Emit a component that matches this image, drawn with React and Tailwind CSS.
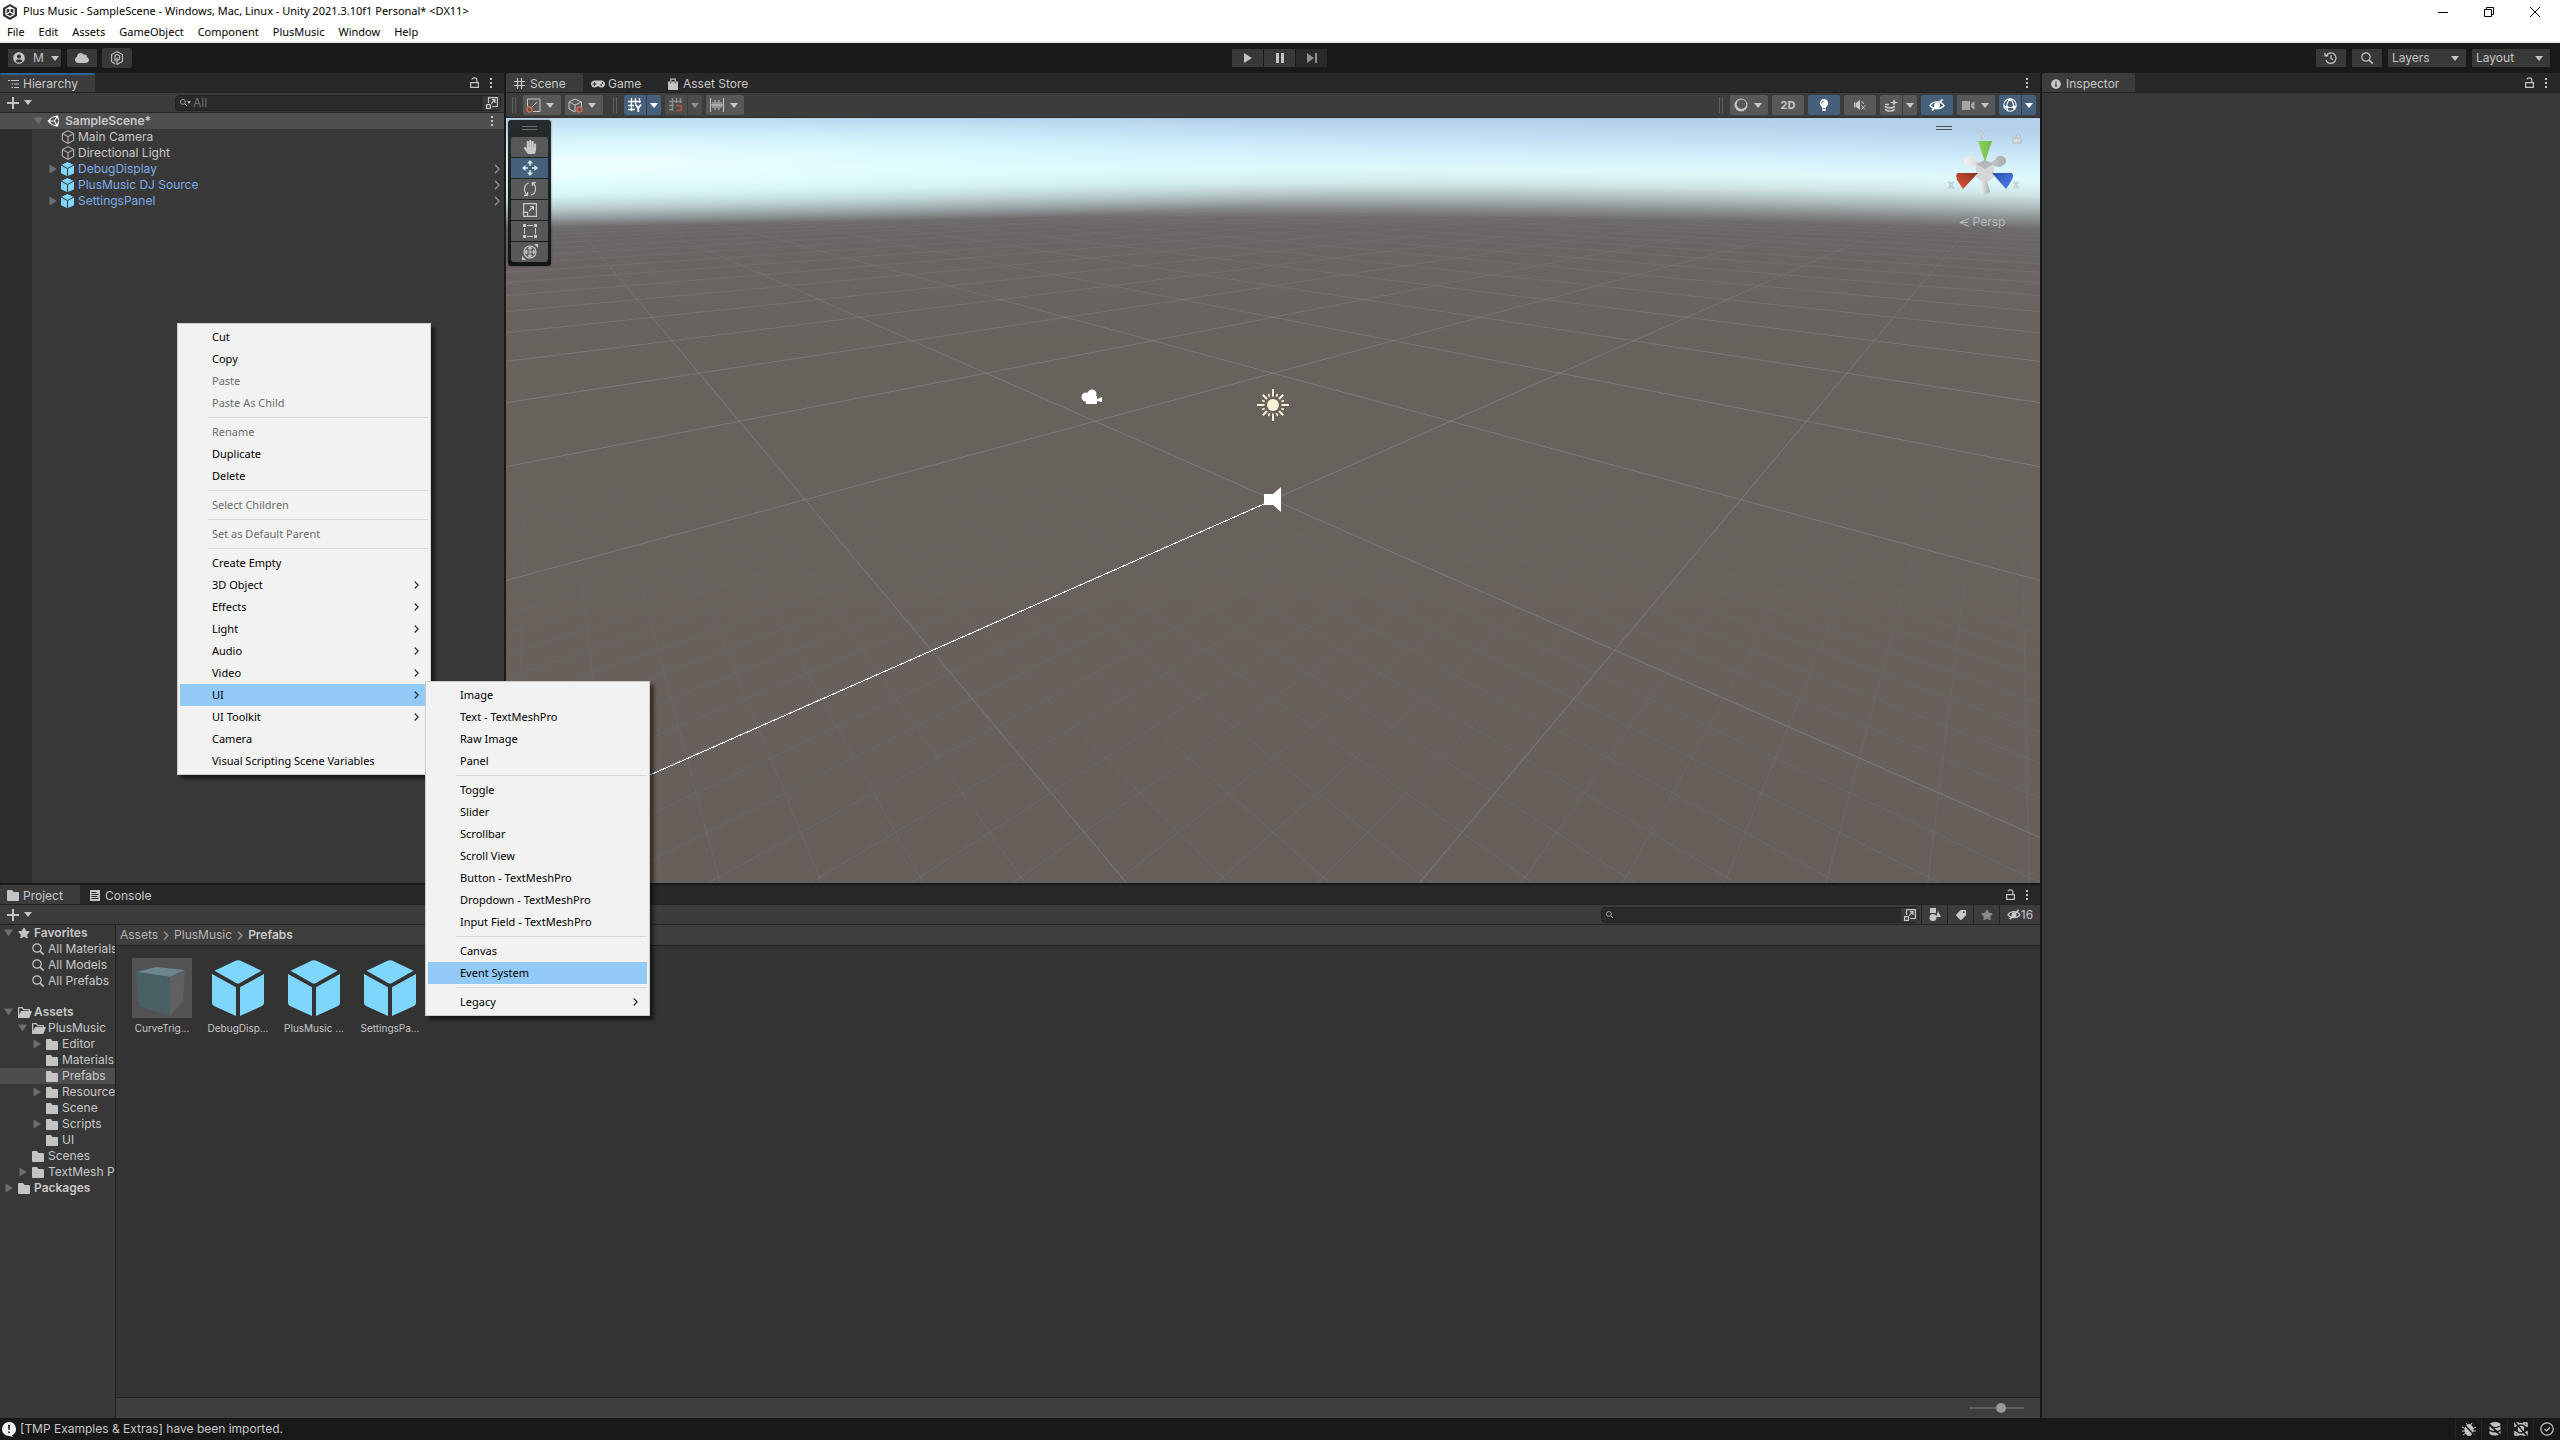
import { FaUnity, FaUserCircle, FaCloud, FaStar, FaTag, FaHandPaper, FaGamepad, FaLightbulb, FaInfoCircle } from "react-icons/fa";

const contextMenu = [
  { label: "Cut" },
  { label: "Copy" },
  { label: "Paste", disabled: true },
  { label: "Paste As Child", disabled: true },
  null,
  { label: "Rename", disabled: true },
  { label: "Duplicate" },
  { label: "Delete" },
  null,
  { label: "Select Children", disabled: true },
  null,
  { label: "Set as Default Parent", disabled: true },
  null,
  { label: "Create Empty" },
  { label: "3D Object", sub: true },
  { label: "Effects", sub: true },
  { label: "Light", sub: true },
  { label: "Audio", sub: true },
  { label: "Video", sub: true },
  { label: "UI", sub: true, active: true },
  { label: "UI Toolkit", sub: true },
  { label: "Camera" },
  { label: "Visual Scripting Scene Variables" },
];

const uiMenu = [
  { label: "Image" },
  { label: "Text - TextMeshPro" },
  { label: "Raw Image" },
  { label: "Panel" },
  null,
  { label: "Toggle" },
  { label: "Slider" },
  { label: "Scrollbar" },
  { label: "Scroll View" },
  { label: "Button - TextMeshPro" },
  { label: "Dropdown - TextMeshPro" },
  { label: "Input Field - TextMeshPro" },
  null,
  { label: "Canvas" },
  { label: "Event System", active: true },
  null,
  { label: "Legacy", sub: true },
];

const hierarchy = [
  { label: "Main Camera" },
  { label: "Directional Light" },
  { label: "DebugDisplay", prefab: true, arrow: true },
  { label: "PlusMusic DJ Source", prefab: true },
  { label: "SettingsPanel", prefab: true, arrow: true },
];

const favorites = [
  { label: "Favorites", icon: "star", level: 0, arrow: "down", bold: true },
  { label: "All Materials", icon: "search", level: 1 },
  { label: "All Models", icon: "search", level: 1 },
  { label: "All Prefabs", icon: "search", level: 1 },
];

const folders = [
  { label: "Assets", icon: "open", level: 0, arrow: "down", bold: true },
  { label: "PlusMusic", icon: "open", level: 1, arrow: "down" },
  { label: "Editor", icon: "folder", level: 2, arrow: "right" },
  { label: "Materials", icon: "folder", level: 2 },
  { label: "Prefabs", icon: "folder", level: 2, active: true },
  { label: "Resources", icon: "folder", level: 2, arrow: "right" },
  { label: "Scene", icon: "folder", level: 2 },
  { label: "Scripts", icon: "folder", level: 2, arrow: "right" },
  { label: "UI", icon: "folder", level: 2 },
  { label: "Scenes", icon: "folder", level: 1 },
  { label: "TextMesh Pro", icon: "folder", level: 1, arrow: "right" },
  { label: "Packages", icon: "folder", level: 0, arrow: "right", bold: true },
];

/* ---------- icons ---------- */

function Caret({ className = "" }) {
  return (
    <svg viewBox="0 0 8 5" className={`h-[5px] w-2 shrink-0 fill-current ${className}`}>
      <path d="M0 0h8L4 5z" />
    </svg>
  );
}

function TreeArrow({ dir }) {
  return (
    <svg viewBox="0 0 10 10" className="size-[10px] shrink-0 fill-[#6e6e6e]">
      {dir === "down" && <path d="M0 1.5h9L4.5 8.5z" />}
      {dir === "right" && <path d="M1.5 .5v9L9 5z" />}
    </svg>
  );
}

function Dots() {
  return (
    <svg viewBox="0 0 4 12" className="h-3 w-1 fill-[#c4c4c4]">
      <path d="M1 1h2v2H1zM1 5h2v2H1zM1 9h2v2H1z" />
    </svg>
  );
}

function Lock() {
  return (
    <svg viewBox="0 0 9 11" className="h-[11px] w-[9px] fill-none stroke-[#c4c4c4]" strokeWidth="1.2">
      <path d="M.6 5.6h7.800v4.800H.6zM2 2.500C2.400.2 6.800.2 6.800 2.800v2.800" />
    </svg>
  );
}

function Plus() {
  return (
    <svg viewBox="0 0 12 12" className="size-3 stroke-[#c4c4c4]" strokeWidth="2">
      <path d="M6 0v12M0 6h12" />
    </svg>
  );
}

function Magnifier({ className = "size-3" }) {
  return (
    <svg viewBox="0 0 12 12" className={`shrink-0 fill-none stroke-[#c4c4c4] ${className}`} strokeWidth="1.2">
      <circle cx="5" cy="5" r="4.2" />
      <path d="M8 8l3.600 3.600" strokeWidth="1.6" />
    </svg>
  );
}

function Popout() {
  return (
    <svg viewBox="0 0 12 12" className="size-3 fill-none stroke-[#c4c4c4]" strokeWidth="1.2">
      <path d="M2.500 6V.6h8.900v8.900H6M.6 7.600h3.800v3.800H.6zM5 6.700l4-4M5.800 2.700H9v3.200" />
    </svg>
  );
}

function CubeOutline() {
  return (
    <svg viewBox="0 0 14 14" className="size-[14px] shrink-0 fill-none stroke-[#c4c4c4]" strokeWidth="1">
      <path d="M7 .6l5.700 2.900v6.800L7 13.400 1.300 10.300V3.500zM1.300 3.500L7 6.600l5.700-3.100M7 6.600v6.800" />
    </svg>
  );
}

function PrefabCube({ className }) {
  return (
    <svg viewBox="0 0 52 56" className={`shrink-0 fill-[#7fd6fd] ${className}`}>
      <path d="M2.500 10.700L24 .6q2-.9 4 0l21.500 10.100L28 23q-2 1.100-4 0z" />
      <path d="M0 14l24 13.300V56L2 46q-2-1-2-3z" />
      <path d="M52 14L28 27.300V56l22-10q2-1 2-3z" />
    </svg>
  );
}

function Folder() {
  return (
    <svg viewBox="0 0 12 11" className="h-[11px] w-3 shrink-0 fill-[#c4c4c4]">
      <path d="M0 1q0-1 1-1h4l1.500 2H11q1 0 1 1v7q0 1-1 1H1q-1 0-1-1z" />
    </svg>
  );
}

function FolderOpen() {
  return (
    <svg viewBox="0 0 14 11" className="h-[11px] w-[14px] shrink-0 fill-[#c4c4c4]">
      <path d="M0 10.500V1q0-1 1-1h3.500L6 2h5q1 0 1 1v1h-1.200V3.200H5.300L4 1.300H1.200V8L3 4h11l-2.200 6q-.4 1-1.300 1H.8q-.5 0-.8-.5z" />
    </svg>
  );
}

function HierarchyIcon() {
  return (
    <svg viewBox="0 0 11 10" className="h-[10px] w-[11px] stroke-[#c4c4c4]" strokeWidth="1.2">
      <path d="M0 1.500h2M3 1.500h8M3.500 5H5M6 5h5M3.500 8.500H5M6 8.500h5" />
    </svg>
  );
}

function GridIcon() {
  return (
    <svg viewBox="0 0 11 11" className="size-[11px] stroke-current" strokeWidth="1.2">
      <path d="M3.500 0v11M7.500 0v11M0 3.500h11M0 7.500h11" />
    </svg>
  );
}

function StoreIcon() {
  return (
    <svg viewBox="0 0 10 12" className="h-3 w-[10px]">
      <path d="M0 3.500h10V11q0 1-1 1H1q-1 0-1-1z" fill="#c4c4c4" />
      <path d="M2.800 5V1.200h4.400V5" fill="none" stroke="#c4c4c4" strokeWidth="1.2" />
      <path d="M2.800 3.500v2M7.200 3.500v2" stroke="#282828" strokeWidth="0.8" />
    </svg>
  );
}

function ConsoleIcon() {
  return (
    <svg viewBox="0 0 10 11" className="h-[11px] w-[10px]">
      <path d="M0 0h10v11H0z" fill="#c4c4c4" />
      <path d="M1.500 2.500h5M1.500 4.500h7M1.500 6.500h6M1.500 8.500h7" stroke="#282828" strokeWidth="1" />
    </svg>
  );
}

function EyeOff({ className = "h-3 w-4" }) {
  return (
    <svg viewBox="0 0 16 12" className={`fill-none stroke-current ${className}`} strokeWidth="1.4">
      <path d="M1 6.500C4 1.600 12 1.600 15 6.500 12 10.600 4 10.600 1 6.500z" />
      <circle cx="8" cy="6.3" r="2.2" fill="currentColor" />
      <path d="M3 11.500L13.500.5" strokeWidth="1.8" />
    </svg>
  );
}

function MenuChevron() {
  return (
    <svg viewBox="0 0 5 8" className="h-2 w-[5px] fill-none stroke-[#333]" strokeWidth="1.3">
      <path d="M.7.5L4.200 4 .7 7.500" />
    </svg>
  );
}

/* ---------- shared controls ---------- */

function Tab({ icon, children, active, focus, className = "" }) {
  return (
    <button
      type="button"
      className={`flex h-[19px] items-center text-xs text-[#c8c8c8] ${active ? "rounded-t-[2px] bg-[#3c3c3c]" : ""} ${focus ? "border-t-2 border-[#2f6294]" : "border-t-2 border-transparent"} ${className}`}
    >
      {icon}
      {children}
    </button>
  );
}

function ToolButton({ on, label, className = "", children }) {
  return (
    <button
      type="button"
      aria-label={label}
      className={`flex h-5 items-center justify-center ${on ? "bg-[#46607c] text-white" : "bg-[#585858] text-[#c8c8c8]"} ${className}`}
    >
      {children}
    </button>
  );
}

function Grip() {
  return <span className="h-4 w-1 border-x border-[#606060]" />;
}

function Menu({ items, className }) {
  return (
    <div className={`absolute border border-[#ccc] bg-[#f2f2f2] p-[2px] font-['Noto_Sans',sans-serif] text-[11px] text-black shadow-[4px_4px_3px_rgba(0,0,0,0.5)] ${className}`}>
      {items.map((item, i) =>
        item === null ? (
          <hr key={i} className="my-[3px] ml-7 border-t border-[#d7d7d7]" />
        ) : (
          <button
            key={i}
            type="button"
            disabled={item.disabled}
            className={`flex h-[22px] w-full items-center justify-between pr-[9px] pl-8 ${item.disabled ? "text-[#6d6d6d]" : ""} ${item.active ? "bg-[#91c9f7]" : ""}`}
          >
            {item.label}
            {item.sub && <MenuChevron />}
          </button>
        )
      )}
    </div>
  );
}

/* ---------- window chrome ---------- */

function TitleBar() {
  return (
    <header className="border-b-2 border-[#ebedec] bg-white font-['Noto_Sans',sans-serif] text-[11px] text-black">
      <div className="flex h-[23px] items-center pl-[3px]">
        <svg viewBox="0 0 14 16" className="h-4 w-[14px]">
          <path d="M7 0l7 4v8l-7 4-7-4V4z" fill="#333" />
          <path d="M7 3l4 2.300v5L7 12.800 3 10.300v-5zM7 8V3M7 8l4 2.300M7 8l-4 2.300" fill="none" stroke="#fff" strokeWidth="1.3" />
        </svg>
        <h1 className="ml-[6px] flex-1">Plus Music - SampleScene - Windows, Mac, Linux - Unity 2021.3.10f1 Personal* &lt;DX11&gt;</h1>
        <div className="flex gap-9 pr-5">
          <button type="button" aria-label="Minimize">
            <svg viewBox="0 0 10 10" className="size-[10px] stroke-black"><path d="M0 5.500h10" /></svg>
          </button>
          <button type="button" aria-label="Restore">
            <svg viewBox="0 0 10 10" className="size-[10px] fill-none stroke-black"><path d="M.5 2.500h7v7h-7zM2.500 2.500v-2h7v7h-2" /></svg>
          </button>
          <button type="button" aria-label="Close">
            <svg viewBox="0 0 10 10" className="size-[10px] stroke-black"><path d="M0 0l10 10M10 0L0 10" /></svg>
          </button>
        </div>
      </div>
      <nav className="flex h-[18px] items-center gap-[14px] pl-[7px]">
        {["File", "Edit", "Assets", "GameObject", "Component", "PlusMusic", "Window", "Help"].map((m) => (
          <button key={m} type="button">{m}</button>
        ))}
      </nav>
    </header>
  );
}

function TopSelect({ label }) {
  return (
    <label className="flex h-[18px] w-[78px] items-center bg-[#383838] pr-[7px]">
      <select aria-label={label} className="min-w-0 flex-1 appearance-none pl-1 text-xs text-[#c4c4c4] outline-none">
        <option>{label}</option>
      </select>
      <Caret className="text-[#c4c4c4]" />
    </label>
  );
}

function MainToolbar() {
  return (
    <div className="grid h-[30px] grid-cols-3 items-center bg-[#191919] text-[#c4c4c4]">
      <div className="flex items-center pl-2">
        <button type="button" className="flex h-[18px] w-[53px] items-center bg-[#383838] pl-[5px] text-xs">
          <FaUserCircle className="size-3" />
          <span className="mr-[7px] ml-2">M</span>
          <Caret />
        </button>
        <button type="button" aria-label="Cloud" className="ml-[6px] flex h-[18px] w-[30px] items-center justify-center bg-[#383838]">
          <FaCloud className="size-[14px]" />
        </button>
        <button type="button" aria-label="PlusMusic" className="ml-[5px] flex h-5 w-[30px] items-center justify-center rounded-[2px] bg-[#383838]">
          <svg viewBox="0 0 12 14" className="h-[14px] w-3 fill-none stroke-current" strokeWidth="1.1">
            <path d="M4 13L.6 10.500v-7L6 .6l5.400 2.900v7L6 13.400V6.500M4 10.500V4.800L6 3.400l2.600 1.600v3L6 9.800" />
          </svg>
        </button>
      </div>
      <div className="flex justify-center gap-px">
        <button type="button" aria-label="Play" className="flex h-[18px] w-[31px] items-center justify-center bg-[#383838]">
          <svg viewBox="0 0 8 10" className="h-[10px] w-2 fill-current"><path d="M0 0l8 5-8 5z" /></svg>
        </button>
        <button type="button" aria-label="Pause" className="flex h-[18px] w-[31px] items-center justify-center bg-[#383838]">
          <svg viewBox="0 0 8 10" className="h-[10px] w-2 fill-current"><path d="M0 0h3v10H0zM5 0h3v10H5z" /></svg>
        </button>
        <button type="button" aria-label="Step" className="flex h-[18px] w-[31px] items-center justify-center bg-[#2a2a2a] text-[#8f8f8f]">
          <svg viewBox="0 0 10 10" className="size-[10px] fill-current"><path d="M0 0l7 5-7 5zM8 0h2v10H8z" /></svg>
        </button>
      </div>
      <div className="flex justify-end gap-[6px] pr-[10px]">
        <button type="button" aria-label="Undo history" className="flex h-[18px] w-[30px] items-center justify-center bg-[#383838]">
          <svg viewBox="0 0 13 12" className="h-3 w-[13px] fill-none stroke-current" strokeWidth="1.3">
            <path d="M2.300 3.500A5.200 5.200 0 1 1 2 8.200M1 .8v3h3.200M7 3.200V6.500l2 1.300" />
          </svg>
        </button>
        <button type="button" aria-label="Search" className="flex h-[18px] w-[30px] items-center justify-center bg-[#383838]">
          <Magnifier />
        </button>
        <TopSelect label="Layers" />
        <TopSelect label="Layout" />
      </div>
    </div>
  );
}

/* ---------- hierarchy ---------- */

function Hierarchy() {
  return (
    <section className="flex w-[504px] shrink-0 flex-col bg-[#383838]">
      <div className="flex items-center border-b border-[#232323] bg-[#282828] pr-[11px]">
        <Tab active focus icon={<HierarchyIcon />} className="w-[95px] gap-1 pl-2">Hierarchy</Tab>
        <div className="ml-auto flex items-center gap-[10px]">
          <Lock />
          <Dots />
        </div>
      </div>
      <div className="flex h-5 items-center border-b border-[#232323] bg-[#3c3c3c] pr-[3px] pl-[7px]">
        <button type="button" aria-label="Create" className="flex items-center gap-[5px] text-[#c4c4c4]">
          <Plus />
          <Caret />
        </button>
        <label className="ml-auto flex h-4 w-[326px] items-center rounded-[4px] border border-[#212121] bg-[#2a2a2a] pl-1">
          <Magnifier className="size-[7px]" />
          <Caret className="h-[3px] w-[4px] text-[#c4c4c4]" />
          <input placeholder="All" aria-label="Search hierarchy" className="ml-[2px] min-w-0 flex-1 text-xs text-[#c4c4c4] placeholder-[#6e6e6e] outline-none" />
          <span className="flex h-full w-[17px] items-center justify-center bg-[#3a3a3a]"><Popout /></span>
        </label>
      </div>
      <div className="flex flex-1 flex-col text-xs text-[#c8c8c8]">
        <div className="flex h-4 items-center bg-[#4f4f4f] pr-[10px] pl-[34px] font-semibold">
          <TreeArrow dir="down" />
          <FaUnity className="mr-1 ml-[3px] size-[14px] text-white" />
          <span className="flex-1">SampleScene*</span>
          <Dots />
        </div>
        <div className="flex flex-1">
          <div className="w-8 bg-[#2d2d2d]" />
          <ul className="flex-1">
            {hierarchy.map((item) => (
              <li key={item.label} className={`flex h-4 items-center pr-1 pl-4 ${item.prefab ? "text-[#7faae8]" : ""}`}>
                <TreeArrow dir={item.arrow ? "right" : ""} />
                <span className="mr-[3px] ml-[3px] flex w-[14px]">
                  {item.prefab ? <PrefabCube className="h-[14px] w-[13px]" /> : <CubeOutline />}
                </span>
                <span className="flex-1">{item.label}</span>
                {item.prefab && (
                  <svg viewBox="0 0 6 10" className="h-[10px] w-[6px] fill-none stroke-[#8a8a8a]" strokeWidth="1.6">
                    <path d="M1 .8L5 5 1 9.200" />
                  </svg>
                )}
              </li>
            ))}
          </ul>
        </div>
      </div>
    </section>
  );
}

/* ---------- scene view ---------- */

// Ground plane projection: grid node (i, j) to view coordinates.
const HORIZON = 54.7;
const DEPTH = 1.586;

function project(i, j) {
  const z = DEPTH + (i + j) / 2;
  return [767 + (742 * (i - j)) / 2 / z, HORIZON + 518.5 / z];
}

function gridPath(step, count, far) {
  let d = "";
  for (let n = -count; n <= count; n++) {
    const i = n * step;
    const start = 2 * (0.25 - DEPTH) - i;
    if (start > far) continue;
    const [x1, y1] = project(i, start);
    const [x2, y2] = project(i, far);
    d += `M${x1.toFixed(1)} ${y1.toFixed(1)}L${x2.toFixed(1)} ${y2.toFixed(1)}`;
    d += `M${(1534 - x1).toFixed(1)} ${y1.toFixed(1)}L${(1534 - x2).toFixed(1)} ${y2.toFixed(1)}`;
  }
  return d;
}

const majorGrid = gridPath(1, 24, 60);
const minorGrid = gridPath(0.1, 60, 6);

function Viewport() {
  return (
    <svg viewBox="0 0 1534 766" preserveAspectRatio="xMidYMin slice" className="absolute inset-0 size-full">
      <defs>
        <radialGradient id="sky" gradientUnits="userSpaceOnUse" cx="0" cy="0" r="1100" gradientTransform="translate(767 1096) scale(4.95 1)">
          <stop offset="0.3" stopColor="#675f5a" />
          <stop offset="0.8" stopColor="#68625d" />
          <stop offset="0.895" stopColor="#6b6665" />
          <stop offset="0.906" stopColor="#6e696b" />
          <stop offset="0.914" stopColor="#868a8b" />
          <stop offset="0.925" stopColor="#acb9ba" />
          <stop offset="0.937" stopColor="#d0e6e6" />
          <stop offset="0.95" stopColor="#dffafb" />
          <stop offset="0.965" stopColor="#d3effb" />
          <stop offset="0.98" stopColor="#c2dff3" />
          <stop offset="0.996" stopColor="#b4d0ea" />
        </radialGradient>
        <radialGradient id="glow" gradientUnits="userSpaceOnUse" cx="0" cy="0" r="100" gradientTransform="translate(70 46) scale(9 0.62)">
          <stop offset="0" stopColor="#f0ffff" />
          <stop offset="0.5" stopColor="#dcffff" stopOpacity="0.6" />
          <stop offset="1" stopColor="#d0f4ff" stopOpacity="0" />
        </radialGradient>
        <linearGradient id="farFade" x1="0" y1="0" x2="0" y2="766" gradientUnits="userSpaceOnUse">
          <stop offset="0.1" stopColor="#8d8f90" stopOpacity="0" />
          <stop offset="0.2" stopColor="#8d8f90" stopOpacity="0.25" />
          <stop offset="0.35" stopColor="#8d8f90" stopOpacity="0.55" />
          <stop offset="1" stopColor="#858787" stopOpacity="0.5" />
        </linearGradient>
        <linearGradient id="nearFade" x1="0" y1="0" x2="0" y2="766" gradientUnits="userSpaceOnUse">
          <stop offset="0.42" stopColor="#7c7d7b" stopOpacity="0" />
          <stop offset="0.7" stopColor="#7c7d7b" stopOpacity="0.16" />
          <stop offset="1" stopColor="#7c7d7b" stopOpacity="0.35" />
        </linearGradient>
      </defs>
      <rect width="1534" height="766" fill="url(#sky)" />
      <rect width="1534" height="108" fill="url(#glow)" />
      <path d={minorGrid} stroke="url(#nearFade)" fill="none" />
      <path d={majorGrid} stroke="url(#farFade)" fill="none" />
      <path d="M767 382L144 657L0 722" stroke="#fff" fill="none" shapeRendering="crispEdges" />

      {/* camera gizmo */}
      <g fill="#fff" transform="translate(575 271)">
        <circle cx="5" cy="8" r="4.5" />
        <circle cx="11" cy="5" r="4.5" />
        <path d="M4 7h12v3l5-2v5l-5-1v3H5z" />
      </g>
      {/* light gizmo */}
      <g stroke="#fff1d6" strokeWidth="2" transform="translate(767 287)">
        <circle r="6" fill="#fff1d6" stroke="none" />
        {[0, 45, 90, 135, 180, 225, 270, 315].map((a) => (
          <g key={a} transform={`rotate(${a})`}>
            <path d={a % 90 ? "M0-8.500v-6" : "M0-8.500v-7.500"} />
            <path d="M0-9v-3" transform="rotate(22.5)" strokeWidth="1.6" />
          </g>
        ))}
      </g>
      {/* audio source gizmo */}
      <path d="M758 376h9l8-7v25l-8-7h-9z" fill="#fff" />
    </svg>
  );
}

function AxisGizmo() {
  return (
    <div className="absolute top-2 right-3 flex w-[92px] flex-col items-center">
      <svg viewBox="0 0 92 84" className="h-[84px] w-[92px]">
        <defs>
          <linearGradient id="gy"><stop stopColor="#86d65a" /><stop offset="1" stopColor="#79b84f" /></linearGradient>
          <linearGradient id="gx" x1="0" y1="1" x2="1" y2="0"><stop stopColor="#e2553c" /><stop offset="1" stopColor="#8c3022" /></linearGradient>
          <linearGradient id="gz" x1="1" y1="1" x2="0" y2="0"><stop stopColor="#4b84f5" /><stop offset="1" stopColor="#2c50a8" /></linearGradient>
          <linearGradient id="gw"><stop stopColor="#f2f2f2" /><stop offset="1" stopColor="#a9adae" /></linearGradient>
        </defs>
        <path d="M0 .5h16M0 3.500h16" stroke="#4a4f52" />
        <path d="M45 43L38 40q-3 2-6 0-4-2-4-5 0-4 4-5 5-1 7 4l8 4zM53 43l7-3q3 2 6 0 4-2 4-5 0-4-4-5-5-1-7 4l-8 4z" fill="url(#gw)" />
        <path d="M40 38l9-4 9 4v13l-9 7-9-7z" fill="#d4d6d7" />
        <path d="M40 38l9-4 9 4-9 5z" fill="#b5b9ba" />
        <path d="M47 55h4l3 10q0 3-5 3t-5-3z" fill="url(#gw)" />
        <path d="M42 15h14l-7 21z" fill="url(#gy)" />
        <path d="M42 47H22q-3 1-1 7l6 9z" fill="url(#gx)" />
        <path d="M56 47h20q2 2 0 7l-6 9z" fill="url(#gz)" />
        <path d="M77 12h8v5h-8zM80 12c0-5 4-5 4-1" fill="#d8dcde" stroke="#aab0b4" strokeWidth="0.8" />
        <g fill="#eef2f3" stroke="#a9b2b5" strokeWidth="0.5" fontFamily="Inter, sans-serif" fontSize="11" fontWeight="600">
          <text x="44" y="11">y</text>
          <text x="12" y="62">x</text>
          <text x="77" y="62">z</text>
        </g>
      </svg>
      <button type="button" className="mt-1 flex items-center gap-1 text-xs text-[#b9bcbd]">
        <svg viewBox="0 0 10 9" className="h-[9px] w-[10px] fill-none stroke-current"><path d="M10 .5L.8 4.500 10 8.500M.8 4.500H9" /></svg>
        Persp
      </button>
    </div>
  );
}

function ToolPalette() {
  return (
    <div className="absolute top-[2px] left-[2px] flex w-[43px] flex-col items-center gap-px rounded-[3px] bg-gradient-to-b from-[#262c2d] to-[#151515] pt-[6px] pb-1 shadow-[0_0_2px_rgba(0,0,0,0.5)]">
      <span className="mb-[6px] h-1 w-[15px] border-y border-[#6b6f70]" />
      <ToolButton label="View" className="w-[37px] rounded-t-[3px]"><FaHandPaper className="size-[14px]" /></ToolButton>
      <ToolButton on label="Move" className="w-[37px]">
        <svg viewBox="0 0 16 16" className="size-4 fill-[#dfe6ee] stroke-[#dfe6ee]" strokeWidth="1.4">
          <path d="M8 1v5M8 10v5M1 8h5M10 8h5" /><path stroke="none" d="M8 0l3 3.500H5zM8 16l3-3.500H5zM0 8l3.500-3v6zM16 8l-3.500-3v6z" />
        </svg>
      </ToolButton>
      <ToolButton label="Rotate" className="w-[37px]">
        <svg viewBox="0 0 14 14" className="size-[14px] fill-none stroke-current" strokeWidth="1.2">
          <path d="M6 1C1 2 0 9 4 13M1 13.400h3.600V10M8 13c5-1 6-8 2-12M13 .6H9.400V4" />
        </svg>
      </ToolButton>
      <ToolButton label="Scale" className="w-[37px]">
        <svg viewBox="0 0 14 14" className="size-[14px] fill-none stroke-current" strokeWidth="1.2">
          <path d="M.6.6h12.800v12.800H.6zM.6 9.400h4v4M6 8l4.500-4.500M7 3.500h3.500V7" />
        </svg>
      </ToolButton>
      <ToolButton label="Rect" className="w-[37px]">
        <svg viewBox="0 0 14 14" className="size-[14px] fill-current stroke-current">
          <path stroke="none" d="M0 0h3v3H0zM11 0h3v3h-3zM0 11h3v3H0zM11 11h3v3h-3z" /><path d="M4 1.500h6M4 12.500h6M1.500 4v6M12.500 4v6" />
        </svg>
      </ToolButton>
      <ToolButton label="Transform" className="w-[37px] rounded-b-[3px]">
        <svg viewBox="0 0 16 16" className="size-4 fill-none stroke-current" strokeWidth="1.1">
          <circle cx="8" cy="8" r="6" /><path d="M8 3v10M3 8h10M6 5l2-2 2 2M6 11l2 2 2-2M5 6L3 8l2 2M11 6l2 2-2 2" /><path fill="currentColor" stroke="none" d="M12 0h4v4zM0 12v4h4z" />
        </svg>
      </ToolButton>
    </div>
  );
}

function SceneView() {
  return (
    <section className="flex min-w-0 flex-1 flex-col bg-[#383838]">
      <div className="flex items-center border-b border-[#232323] bg-[#282828] pr-[11px]">
        <Tab active icon={<GridIcon />} className="w-[77px] gap-[5px] pl-2">Scene</Tab>
        <Tab icon={<FaGamepad className="size-[14px]" />} className="w-[77px] gap-[3px] pl-2">Game</Tab>
        <Tab icon={<StoreIcon />} className="gap-[5px] pl-2">Asset Store</Tab>
        <div className="ml-auto"><Dots /></div>
      </div>
      <div className="flex h-6 items-center bg-[#3c3c3c] pr-1 pl-[6px]">
        <Grip />
        <ToolButton label="Pivot" className="ml-[7px] w-[38px] gap-[5px] rounded-[2px] pr-1">
          <svg viewBox="0 0 15 15" className="size-[15px] fill-none stroke-current">
            <path d="M1.500 8.500V1h12.500v12.500H7M6 9L11 4" /><circle cx="3.500" cy="11.500" r="2.5" stroke="#e0694a" strokeWidth="1.3" />
          </svg>
          <Caret />
        </ToolButton>
        <ToolButton label="Space" className="ml-1 w-[38px] gap-[5px] rounded-[2px] pr-1">
          <svg viewBox="0 0 15 15" className="size-[15px] fill-none stroke-current">
            <path d="M7 14L1 11V4l6-3 6.500 3v5M1 4l6 3 6.500-3M7 7v7" /><circle cx="11.500" cy="11.500" r="2.5" stroke="#e0694a" strokeWidth="1.3" />
          </svg>
          <Caret />
        </ToolButton>
        <span className="ml-[10px] flex"><Grip /></span>
        <ToolButton on label="Grid" className="ml-[7px] w-[22px] rounded-l-[2px]">
          <svg viewBox="0 0 14 14" className="size-[14px] fill-none stroke-current" strokeWidth="1.3">
            <path d="M3.500 0v13M7.500 0v6M11.500 0v5M0 3.500h13M0 7.500h6M0 11.500h7" /><path d="M7.500 6.500L10.300 10l2.800-3.500M10.300 10v4" strokeWidth="1.8" />
          </svg>
        </ToolButton>
        <ToolButton on label="Grid options" className="ml-px w-[14px] rounded-r-[2px]"><Caret /></ToolButton>
        <ToolButton label="Snap" className="ml-1 w-[22px] rounded-l-[2px] opacity-60">
          <svg viewBox="0 0 14 14" className="size-[14px] fill-none stroke-current" strokeWidth="1.3">
            <path d="M3.500 0v13M7.500 0v5M11.500 0v5M0 3.500h13M0 7.500h5M0 11.500h4" /><path d="M7 7.500h3a2.500 2.500 0 0 1 0 5H7" stroke="#e0694a" strokeWidth="2" />
          </svg>
        </ToolButton>
        <ToolButton label="Snap options" className="ml-px w-[14px] rounded-r-[2px] opacity-60"><Caret /></ToolButton>
        <ToolButton label="Increment" className="ml-1 w-[38px] gap-[6px] rounded-[2px] pr-[2px]">
          <svg viewBox="0 0 14 14" className="size-[14px] stroke-current">
            <path d="M.5 0v14M13.500 0v14M3 4v6M5 2v10M7 4v6M9 2v10M11 4v6M1 7h12" />
          </svg>
          <Caret />
        </ToolButton>

        <span className="ml-auto flex"><Grip /></span>
        <ToolButton label="Draw mode" className="ml-[7px] w-[38px] gap-[6px] rounded-[2px] pr-[2px]">
          <svg viewBox="0 0 14 14" className="size-[14px]">
            <circle cx="7" cy="7" r="6.5" fill="#c8c8c8" /><circle cx="7.500" cy="6.200" r="4.8" fill="#585858" />
          </svg>
          <Caret />
        </ToolButton>
        <ToolButton label="2D" className="ml-1 w-8 rounded-[2px] text-[11px] font-bold">2D</ToolButton>
        <ToolButton on label="Lighting" className="ml-1 w-8 rounded-[2px]"><FaLightbulb className="size-3" /></ToolButton>
        <ToolButton label="Audio" className="ml-1 w-8 rounded-[2px]">
          <svg viewBox="0 0 12 10" className="h-[10px] w-3 fill-current stroke-current" strokeWidth="1">
            <path stroke="none" d="M0 2.500h1.500v5H0zM2 3l4-3v10L2 7z" /><path d="M7.500 5.500l3.500 4M11 5.500l-3.500 4M7.500 1.500q2 .5 2 2.500" fill="none" />
          </svg>
        </ToolButton>
        <ToolButton label="Effects" className="ml-1 w-[22px] rounded-l-[2px]">
          <svg viewBox="0 0 14 13" className="h-[13px] w-[14px] fill-none stroke-current" strokeWidth="1.5">
            <path d="M1 5.500h4M1 7.500q5 3 10 0M1 10.500q5 3 10 0" /><path stroke="none" fill="currentColor" d="M10 0l1 2.500L14 3.500 11 4.500 10 7 9 4.500 6 3.500l3-1z" />
          </svg>
        </ToolButton>
        <ToolButton label="Effects options" className="ml-px w-[14px] rounded-r-[2px]"><Caret /></ToolButton>
        <ToolButton on label="Scene visibility" className="ml-1 w-8 rounded-[2px]"><EyeOff /></ToolButton>
        <ToolButton label="Camera" className="ml-1 w-[38px] gap-[6px] rounded-[2px] pr-[2px]">
          <svg viewBox="0 0 13 9" className="h-[9px] w-[13px] fill-[#a5a5a5]"><path d="M0 0h8v9H0zM9 3l3.500-3v9L9 6z" /></svg>
          <Caret />
        </ToolButton>
        <ToolButton on label="Gizmos" className="ml-1 w-[22px] rounded-l-[2px]">
          <svg viewBox="0 0 14 14" className="size-[14px] fill-none stroke-current" strokeWidth="1.1">
            <circle cx="7" cy="7" r="6.2" /><path d="M7 1Q2 6 5 13M7 1q4 3 4 10M1 8q6 3 12 0" />
            <g fill="currentColor" stroke="none"><circle cx="7" cy="1.500" r="1.5" /><circle cx="4" cy="9" r="1.5" /><circle cx="11" cy="9" r="1.5" /></g>
          </svg>
        </ToolButton>
        <ToolButton on label="Gizmos options" className="ml-px w-[14px] rounded-r-[2px]"><Caret /></ToolButton>
      </div>
      <div className="relative flex-1 overflow-hidden border-t border-[#2c2c2c]">
        <Viewport />
        <ToolPalette />
        <AxisGizmo />
      </div>
    </section>
  );
}

/* ---------- project ---------- */

const indents = ["pl-1", "pl-[18px]", "pl-8"];

function TreeRow({ item }) {
  return (
    <li className={`flex h-4 items-center whitespace-nowrap ${indents[item.level]} ${item.bold ? "font-semibold" : ""} ${item.active ? "bg-[#4d4d4d]" : ""}`}>
      <TreeArrow dir={item.arrow} />
      <span className="mr-[2px] ml-1 flex w-[14px] shrink-0">
        {item.icon === "star" && <FaStar className="size-3 text-[#c4c4c4]" />}
        {item.icon === "search" && <Magnifier />}
        {item.icon === "folder" && <Folder />}
        {item.icon === "open" && <FolderOpen />}
      </span>
      {item.label}
    </li>
  );
}

function Crumb() {
  return (
    <svg viewBox="0 0 6 9" className="h-[9px] w-[6px] fill-none stroke-[#8a8a8a]" strokeWidth="1.6">
      <path d="M1 .6l4 4-4 4" />
    </svg>
  );
}

function Project() {
  return (
    <section className="flex h-[533px] shrink-0 flex-col bg-[#383838] text-[#c8c8c8]">
      <div className="flex items-center border-b border-[#232323] bg-[#282828] pr-[11px]">
        <Tab active icon={<Folder />} className="w-20 gap-1 pl-[7px]">Project</Tab>
        <Tab icon={<ConsoleIcon />} className="gap-[5px] pl-[10px]">Console</Tab>
        <div className="ml-auto flex items-center gap-[10px]">
          <Lock />
          <Dots />
        </div>
      </div>
      <div className="flex h-5 items-stretch border-b border-[#232323] bg-[#3c3c3c] pl-[7px]">
        <button type="button" aria-label="Create asset" className="flex items-center gap-[5px] text-[#c4c4c4]">
          <Plus />
          <Caret />
        </button>
        <label className="mr-[2px] ml-auto flex h-4 w-[318px] items-center self-center rounded-[4px] border border-[#212121] bg-[#2a2a2a] pl-1">
          <Magnifier className="size-[7px]" />
          <input aria-label="Search project" className="min-w-0 flex-1 text-xs outline-none" />
          <span className="flex h-full w-[17px] items-center justify-center bg-[#3a3a3a]"><Popout /></span>
        </label>
        <button type="button" aria-label="Filter by type" className="flex w-[26px] items-center justify-center border-l border-[#232323]">
          <svg viewBox="0 0 12 13" className="h-[13px] w-3 fill-[#c4c4c4]"><path d="M1 0h6v5H1zM9 3l3 6H7z" /><circle cx="4" cy="9.500" r="3.5" /></svg>
        </button>
        <button type="button" aria-label="Filter by label" className="flex w-[26px] items-center justify-center border-l border-[#232323]"><FaTag className="size-[10px] -scale-x-100" /></button>
        <button type="button" aria-label="Save search" className="flex w-[26px] items-center justify-center border-l border-[#232323] text-[#8a8a8a]"><FaStar className="size-3" /></button>
        <button type="button" className="flex w-[41px] items-center justify-center border-l border-[#232323] text-xs"><EyeOff className="h-[11px] w-[14px]" />16</button>
      </div>
      <div className="flex min-h-0 flex-1 text-xs">
        <div className="w-[116px] shrink-0 overflow-hidden border-r border-[#212121]">
          <ul>{favorites.map((item) => <TreeRow key={item.label} item={item} />)}</ul>
          <ul className="mt-[15px]">{folders.map((item) => <TreeRow key={item.label} item={item} />)}</ul>
        </div>
        <div className="flex flex-1 flex-col bg-[#333]">
          <div className="flex h-[21px] items-center gap-[5px] border-b border-[#232323] bg-[#3e3e3e] pl-1 text-[#b4b4b4]">
            <a href="#assets">Assets</a>
            <Crumb />
            <a href="#plusmusic">PlusMusic</a>
            <Crumb />
            <span className="font-semibold text-[#c8c8c8]">Prefabs</span>
          </div>
          <div className="flex flex-1 pt-3 pl-2 text-[10px]">
            <figure className="flex w-[76px] flex-col items-center">
              <svg viewBox="0 0 60 60" className="size-[60px]">
                <rect width="60" height="60" fill="#525252" />
                <path d="M4 14l20-5 29 3-15 7z" fill="#6c868d" />
                <path d="M4 14l34 5v39L7 48z" fill="#485f64" />
                <path d="M38 19l15-7-2 31-13 15z" fill="#5d6163" />
              </svg>
              <figcaption className="mt-1">CurveTrig...</figcaption>
            </figure>
            {["DebugDisp...", "PlusMusic ...", "SettingsPa..."].map((name) => (
              <figure key={name} className="flex w-[76px] flex-col items-center">
                <span className="flex h-[60px] items-center"><PrefabCube className="h-14 w-[52px]" /></span>
                <figcaption className="mt-1">{name}</figcaption>
              </figure>
            ))}
          </div>
          <div className="flex h-[21px] items-center justify-end border-t border-[#232323] bg-[#3e3e3e] pr-4">
            <input
              type="range"
              aria-label="Icon size"
              defaultValue="60"
              className="h-[2px] w-[55px] appearance-none bg-[#5e5e5e] [&::-webkit-slider-thumb]:size-[10px] [&::-webkit-slider-thumb]:appearance-none [&::-webkit-slider-thumb]:rounded-full [&::-webkit-slider-thumb]:bg-[#999]"
            />
          </div>
        </div>
      </div>
    </section>
  );
}

/* ---------- inspector and status bar ---------- */

function Inspector() {
  return (
    <section className="w-[518px] shrink-0 bg-[#383838]">
      <div className="flex items-center border-b border-[#232323] bg-[#282828] pr-3">
        <Tab active icon={<FaInfoCircle className="size-[10px]" />} className="w-[93px] gap-[5px] pl-[9px]">Inspector</Tab>
        <div className="ml-auto flex items-center gap-[10px]">
          <Lock />
          <Dots />
        </div>
      </div>
    </section>
  );
}

const statusButton = "flex h-5 w-[26px] items-center justify-center border-l border-[#262626]";

function StatusBar() {
  return (
    <footer className="flex h-[22px] items-center bg-[#191919] pr-px pl-[2px] text-xs text-[#c8c8c8]">
      <svg viewBox="0 0 14 15" className="mr-1 h-[15px] w-[14px]">
        <path d="M7 0a7 7 0 0 1 3 13.300L11 15l-4-1A7 7 0 0 1 7 0z" fill="#f0f0f0" />
        <path d="M6 3h2l-.4 5H6.400zM6.200 9.500h1.600V11H6.200z" fill="#191919" />
      </svg>
      <p className="flex-1">[TMP Examples &amp; Extras] have been imported.</p>
      <div className="flex h-full items-center text-[#c4c4c4]">
        <button type="button" aria-label="Debugger" className={statusButton}>
          <svg viewBox="0 0 14 14" className="size-[14px] fill-current stroke-current">
            <ellipse cx="7" cy="8" rx="4" ry="5.5" /><path d="M4 1l2 3M10 1L8 4M0 5l4 2M14 5l-4 2M0 9h14M1 13l3-2M13 13l-3-2" /><path d="M1 1l12 13" stroke="#191919" strokeWidth="1.5" />
          </svg>
        </button>
        <button type="button" aria-label="Cache server" className={statusButton}>
          <svg viewBox="0 0 14 14" className="size-[14px] fill-current">
            <ellipse cx="7" cy="2.500" rx="5.5" ry="2.5" /><path d="M1.500 4.500q5.500 3 11 0v3q-5.500 3-11 0zM1.500 9q5.500 3 11 0v3q-5.500 3-11 0z" /><path d="M1 2l12 12" stroke="#191919" strokeWidth="1.8" />
          </svg>
        </button>
        <button type="button" aria-label="Auto refresh" className={statusButton}>
          <svg viewBox="0 0 14 14" className="size-[14px] fill-none stroke-current" strokeWidth="1.5">
            <path d="M5 1H1v4M9 1h4v4M5 13H1V9M9 13h4V9M1.500 4Q7-1 12.500 4M1.500 10q5.500 5 11 0" /><circle cx="7" cy="7" r="2.5" fill="currentColor" /><path d="M1 0l12 14" stroke="#191919" />
          </svg>
        </button>
        <button type="button" aria-label="Progress" className={statusButton}>
          <svg viewBox="0 0 14 14" className="size-[14px] fill-none stroke-current" strokeWidth="1.2">
            <circle cx="7" cy="7" r="6.2" /><path d="M4.500 7l2 2 3.500-3.500" />
          </svg>
        </button>
      </div>
    </footer>
  );
}

export default function App() {
  return (
    <div className="relative flex min-h-screen flex-col bg-[#191919] font-[Inter,sans-serif]">
      <TitleBar />
      <MainToolbar />
      <main className="flex flex-1 gap-[2px]">
        <div className="flex min-w-0 flex-1 flex-col gap-[2px]">
          <div className="flex flex-1 gap-[2px]">
            <Hierarchy />
            <SceneView />
          </div>
          <Project />
        </div>
        <Inspector />
      </main>
      <StatusBar />
      <Menu items={contextMenu} className="top-[323px] left-[177px] w-[254px]" />
      <Menu items={uiMenu} className="top-[681px] left-[425px] w-[225px]" />
    </div>
  );
}
